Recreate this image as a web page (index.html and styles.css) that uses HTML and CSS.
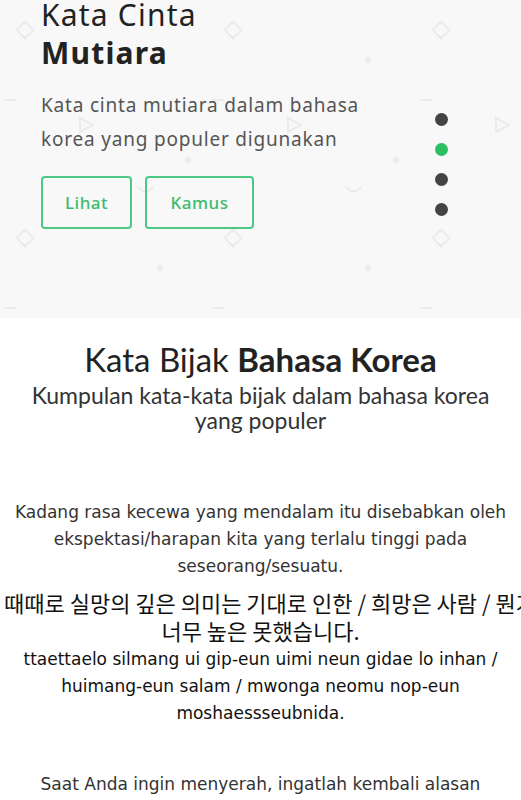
FILE: index.html
```html
<!DOCTYPE html>
<html lang="id">
<head>
<meta charset="utf-8">
<title>Kata Bijak Bahasa Korea</title>
<link rel="stylesheet" href="styles.css">
</head>
<body>
<section class="hero">
  <div class="hero-content">
    <h1 class="hero-title">Kata Cinta <strong>Mutiara</strong></h1>
    <p class="hero-text">Kata cinta mutiara dalam bahasa korea yang populer digunakan</p>
    <div class="hero-actions">
      <a class="btn btn-lihat" href="#">Lihat</a>
      <a class="btn btn-kamus" href="#">Kamus</a>
    </div>
  </div>
  <ul class="dots">
    <li class="dot"></li>
    <li class="dot active"></li>
    <li class="dot"></li>
    <li class="dot"></li>
  </ul>
</section>
<section class="quotes">
  <h2 class="quotes-title">Kata Bijak <strong>Bahasa Korea</strong></h2>
  <p class="quotes-sub">Kumpulan kata-kata bijak dalam bahasa korea yang populer</p>
  <div class="quote">
    <p class="quote-id">Kadang rasa kecewa yang mendalam itu disebabkan oleh ekspektasi/harapan kita yang terlalu tinggi pada seseorang/sesuatu.</p>
    <p class="quote-ko">때때로 실망의 깊은 의미는 기대로 인한 / 희망은 사람 / 뭔가<br>너무 높은 못했습니다.</p>
    <p class="quote-rom">ttaettaelo silmang ui gip-eun uimi neun gidae lo inhan / huimang-eun salam / mwonga neomu nop-eun moshaessseubnida.</p>
  </div>
  <div class="quote quote-next">
    <p class="quote-id">Saat Anda ingin menyerah, ingatlah kembali alasan mengapa Anda memulainya.</p>
  </div>
</section>
</body>
</html>
```
FILE: styles.css
```css
html, body {
  margin: 0;
  padding: 0;
  background: #ffffff;
}
body {
  overflow: hidden;
}
.hero {
  height: 318px;
  background-color: #f8f8f8;
  background-image: url("data:image/svg+xml;utf8,<svg xmlns='http://www.w3.org/2000/svg' width='208' height='208'><g fill='none' stroke='%23ebebeb' stroke-width='2'><rect x='19' y='24' width='12' height='12' transform='rotate(45 25 30)'/><path d='M4 100h12'/><path d='M80 118l13 7-13 7z'/><path d='M138 186a8 8 0 0 0 15 0'/></g><g fill='%23ebebeb'><circle cx='160' cy='60' r='3'/><circle cx='188' cy='160' r='3'/></g></svg>");
  background-repeat: repeat;
  display: flex;
  align-items: flex-start;
  font-family: "Noto Sans", sans-serif;
}
.hero-content {
  padding-left: 41px;
  width: 360px;
}
.hero-title {
  margin: -4px 0 0;
  font-size: 30px;
  line-height: 38px;
  font-weight: 400;
  color: #222;
  letter-spacing: 1.2px;
}
.hero-title strong {
  display: block;
  font-weight: 700;
}
.hero-text {
  margin: 16px 0 0;
  width: 350px;
  font-size: 19px;
  line-height: 34px;
  color: #555;
  letter-spacing: 0.8px;
}
.hero-actions {
  display: flex;
  gap: 13px;
  margin-top: 20px;
}
.btn {
  display: flex;
  align-items: center;
  justify-content: center;
  height: 49px;
  border: 2px solid #4cc882;
  border-radius: 4px;
  color: #3dbb6e;
  font-size: 17px;
  font-weight: 500;
  letter-spacing: 0.5px;
  text-decoration: none;
}
.btn-lihat { width: 87px; }
.btn-kamus { width: 105px; }
.dots {
  list-style: none;
  margin: 113px 0 0 34px;
  padding: 0;
  display: flex;
  flex-direction: column;
  gap: 17px;
}
.dot {
  width: 13px;
  height: 13px;
  border-radius: 50%;
  background: #444;
}
.dot.active {
  background: #2dbe60;
}
.quotes {
  text-align: center;
  padding: 21px 0 0;
}
.quotes-title {
  margin: 0;
  font-family: "Lato", sans-serif;
  font-size: 33px;
  line-height: 40px;
  font-weight: 400;
  color: #222;
}
.quotes-title strong {
  font-weight: 700;
}
.quotes-sub {
  margin: 4px 20px 0;
  font-family: "Lato", sans-serif;
  font-size: 23px;
  line-height: 25px;
  color: #333;
}
.quote {
  margin-top: 66px;
  padding: 0 4px;
  font-family: "DejaVu Sans", sans-serif;
}
.quote-next {
  margin-top: 44px;
}
.quote-id {
  margin: 0;
  font-size: 17px;
  line-height: 27px;
  color: #333;
}
.quote-ko {
  margin: 8px 0 0;
  font-family: "Noto Sans CJK KR", sans-serif;
  font-size: 22px;
  line-height: 28px;
  color: #111;
  white-space: nowrap;
  text-align: center;
}
.quote-rom {
  margin: 2px 0 0;
  font-size: 17px;
  line-height: 27px;
  color: #111;
}
```
